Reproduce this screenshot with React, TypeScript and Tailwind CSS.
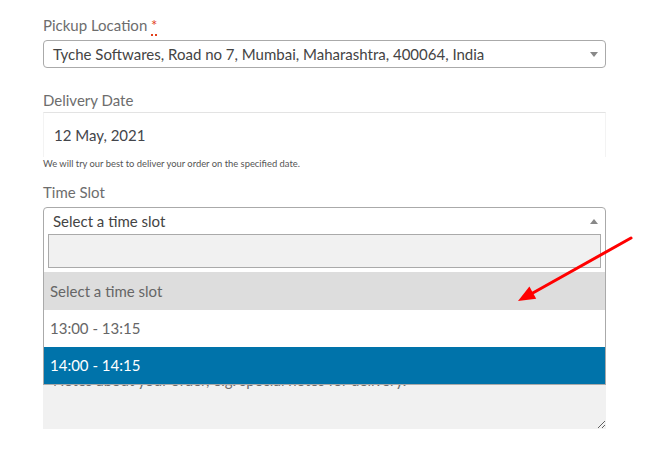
import React from "react";

const font = "font-['Lato','Noto_Sans',sans-serif]";

function Label({ children }: { children: React.ReactNode }) {
  return <div className="text-[15px] leading-[24px] text-[#6d6d6d]">{children}</div>;
}

export default function App() {
  return (
    <div className={`relative w-[652px] h-[465px] overflow-hidden bg-white ${font}`}>
      <form className="ml-[43px] w-[563px] pt-[13px]">
        {/* Pickup location */}
        <Label>
          Pickup Location{" "}
          <abbr className="text-[#e2401c] no-underline border-b-2 border-dotted border-[#e2401c] leading-none">*</abbr>
        </Label>
        <div className="mt-[3px] h-[28px] flex items-center justify-between border border-[#aaa] rounded-[4px] pl-[9px] pr-[7px] text-[15px] text-[#444]">
          <span>Tyche Softwares, Road no 7, Mumbai, Maharashtra, 400064, India</span>
          <span className="w-0 h-0 border-x-[4px] border-x-transparent border-t-[5px] border-t-[#888]" />
        </div>

        {/* Delivery date */}
        <div className="mt-[20px]">
          <Label>Delivery Date</Label>
        </div>
        <div className="h-[45px] flex items-center pl-[10px] border-t border-t-[#e3e3e3] border-l border-l-[#f3f3f3] border-r border-r-[#f3f3f3] text-[15px] text-[#43454b]">
          12 May, 2021
        </div>
        <div className="text-[9.4px] leading-[14px] text-[#555]">
          We will try our best to deliver your order on the specified date.
        </div>

        {/* Time slot (open dropdown) */}
        <div className="mt-[9px]">
          <Label>Time Slot</Label>
        </div>
        <div className="relative mt-[3px]">
          <div className="h-[28px] flex items-center justify-between border border-[#aaa] rounded-t-[4px] pl-[9px] pr-[7px] text-[15px] text-[#444]">
            <span>Select a time slot</span>
            <span className="w-0 h-0 border-x-[4px] border-x-transparent border-b-[5px] border-b-[#888]" />
          </div>
          <div className="absolute left-0 right-0 top-[23px] z-10 bg-white border-x border-b border-[#aaa]">
            <div className="p-[4px]">
              <div className="h-[34px] border border-[#aaa] bg-[#f1f1f1]" />
            </div>
            <ul className="text-[15px]">
              <li className="h-[38px] flex items-center pl-[6px] bg-[#ddd] text-[#666]">Select a time slot</li>
              <li className="h-[37px] flex items-center pl-[6px] bg-white text-[#666]">13:00 - 13:15</li>
              <li className="h-[37px] flex items-center pl-[6px] bg-[#0073aa] text-white">14:00 - 14:15</li>
            </ul>
          </div>

          {/* Order notes */}
          <textarea
            readOnly
            placeholder="Notes about your order, e.g. special notes for delivery."
            className="block mt-[123px] w-full h-[71px] bg-[#f1f1f1] px-[10px] py-[9px] text-[15px] leading-[26px] text-[#43454b] placeholder:text-[#6d6d6d] outline-none"
          />
        </div>
      </form>

      {/* annotation arrow */}
      <svg className="absolute left-0 top-0 pointer-events-none z-20" width="652" height="465">
        <line x1="631" y1="238" x2="531" y2="294" stroke="#ff0000" strokeWidth="3" strokeLinecap="round" />
        <polygon points="518,301 529.4,286.6 536.2,298.8" fill="#ff0000" />
      </svg>
    </div>
  );
}
